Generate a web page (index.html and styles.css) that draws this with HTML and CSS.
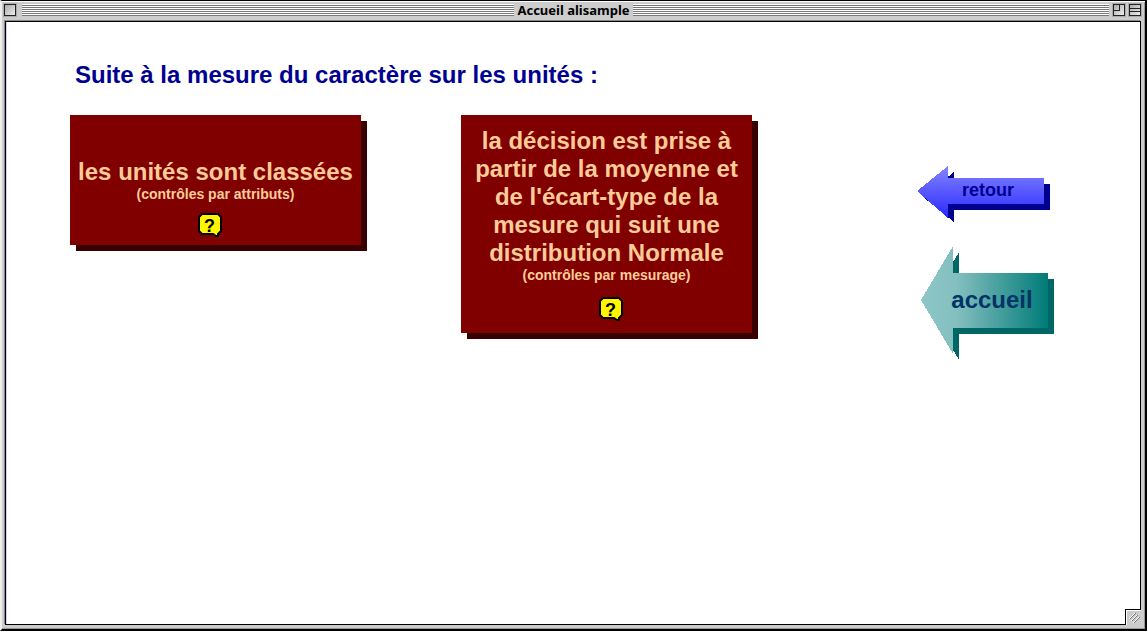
FILE: index.html
```html
<!DOCTYPE html>
<html lang="fr">
<head>
<meta charset="utf-8">
<title>Accueil alisample</title>
<link rel="stylesheet" href="styles.css">
</head>
<body>
<div class="window">
  <header class="titlebar">
    <button class="box box-close" aria-label="Fermer"></button>
    <span class="stripes stripes-left"></span>
    <h1 class="title">Accueil alisample</h1>
    <span class="stripes"></span>
    <button class="box box-zoom" aria-label="Agrandir"><svg viewBox="0 0 10 10" shape-rendering="crispEdges"><path d="M0 5H5V0H6V6H0Z" fill="#222"/></svg></button>
    <button class="box" aria-label="Réduire"><svg viewBox="0 0 10 10" shape-rendering="crispEdges"><path d="M0 3H10V4H0ZM0 6H10V7H0Z" fill="#222"/></svg></button>
  </header>
  <main class="page">
    <h2 class="heading">Suite à la mesure du caractère sur les unités :</h2>
    <div class="choices">
      <section class="card card-short">
        <a class="choice" href="#attributs">les unités sont classées <small class="note">(contrôles par attributs)</small></a>
        <button class="help" aria-label="Aide attributs">
          <svg class="shape" viewBox="0 0 24 25"><path d="M4 1H20L23 4V18L20 21V23H18L15 21H4L1 18V4Z" fill="#fff500" stroke="#000" stroke-width="2"/></svg>
          <span class="mark">?</span>
        </button>
      </section>
      <section class="card card-tall">
        <a class="choice" href="#mesurage">la décision est prise à partir de la moyenne et de l'écart-type de la mesure qui suit une distribution Normale <small class="note">(contrôles par mesurage)</small></a>
        <button class="help" aria-label="Aide mesurage">
          <svg class="shape" viewBox="0 0 24 25"><path d="M4 1H20L23 4V18L20 21V23H18L15 21H4L1 18V4Z" fill="#fff500" stroke="#000" stroke-width="2"/></svg>
          <span class="mark">?</span>
        </button>
      </section>
      <nav class="nav">
        <a class="arrow back" href="#retour">
          <svg class="shape" viewBox="0 0 133 56" shape-rendering="crispEdges">
            <defs><linearGradient id="blue" x1="0" y1="0" x2="0" y2="1"><stop offset="0" stop-color="#8585ff"/><stop offset="1" stop-color="#2929ff"/></linearGradient></defs>
            <path d="M6 31L37 6V18H133V44H37V56Z" fill="#000090"/>
            <path d="M0 25L31 0V12H127V38H31V52Z" fill="url(#blue)"/>
          </svg>
          <span class="label">retour</span>
        </a>
        <a class="arrow home" href="#accueil">
          <svg class="shape" viewBox="0 0 133 114" shape-rendering="crispEdges">
            <defs><linearGradient id="teal"><stop offset="0" stop-color="#8ec6c6"/><stop offset=".28" stop-color="#84bfbf"/><stop offset="1" stop-color="#007b78"/></linearGradient></defs>
            <path d="M6 60L38 6V33H133V88H38V114Z" fill="#006666"/>
            <path d="M0 54L32 0V27H127V82H32V108Z" fill="url(#teal)"/>
          </svg>
          <span class="label">accueil</span>
        </a>
      </nav>
    </div>
  </main>
  <div class="grip"><svg viewBox="0 0 15 15"><path d="M3 9L9 3M5 11L11 5M7 13L13 7" stroke="#fff"/><path d="M4 9L10 3M6 11L12 5M8 13L14 7" stroke="#777"/></svg></div>
</div>
</body>
</html>
```
FILE: styles.css
```css
* {
  box-sizing: border-box;
}

body {
  margin: 0;
  font-family: "Liberation Sans", Arial, sans-serif;
  font-weight: bold;
}

button {
  padding: 0;
  font: inherit;
}

svg {
  display: block;
}

.window {
  position: relative;
  display: flex;
  flex-direction: column;
  min-height: 100vh;
  padding: 0 4px 4px 3px;
  background: #ccc;
  border: solid #000;
  border-width: 1px 2px 2px 0;
  border-left: 2px solid #eee;
  box-shadow: inset 0 1px #fff, inset -1px -1px #999;
}

.titlebar {
  display: flex;
  align-items: center;
  gap: 3px;
  height: 20px;
  margin-left: -1px;
  padding-bottom: 2px;
}

.box {
  flex: none;
  width: 12px;
  height: 12px;
  border: 1px solid #222;
  outline: 1px solid #aaa;
  background: linear-gradient(135deg, #aaa, #eee);
}

.box-close {
  margin-right: 3px;
}

.box-zoom {
  margin: 0 1px;
}

.stripes {
  flex: 1 1 0;
  height: 12px;
  background: repeating-linear-gradient(#fff 0 1px, #777 1px 2px);
}

/* The extra basis offsets the second box on the right, centring the title. */
.stripes-left {
  flex-basis: 16px;
}

.title {
  margin: 0;
  font: bold 13px/18px "Noto Sans", Verdana, sans-serif;
}

.page {
  flex: 1;
  padding: 39px 86px 40px 64px;
  background: #fff;
  border: 1px solid #000;
  box-shadow: inset 1px 0 #ccccff, -1px -1px #888;
}

.heading {
  margin: 0 0 26px;
  padding-left: 5px;
  font-size: 24px;
  line-height: 28px;
  color: #000090;
}

.choices {
  display: grid;
  grid-template-columns: 291fr 291fr 202fr;
  column-gap: 100px;
  align-items: start;
}

.card {
  display: flex;
  flex-direction: column;
  align-items: center;
  padding: 12px 8px 11px;
  color: #ffcc99;
  background: #800000;
  box-shadow: 6px 6px #380000;
  text-align: center;
}

.card-short {
  padding: 43px 0 7px;
}

.choice {
  color: inherit;
  text-decoration: none;
  font-size: 24px;
  line-height: 28px;
}

.note {
  display: block;
  font-size: 14px;
  line-height: 16px;
}

.help {
  position: relative;
  width: 24px;
  height: 25px;
  margin: 11px 12px 0 0;
  border: 0;
  background: none;
  color: #000;
}

.card-tall .help {
  margin: 14px 0 0 8px;
}

.shape {
  position: absolute;
  inset: 0;
  width: 100%;
  height: 100%;
}

.mark {
  position: relative;
  display: block;
  font-size: 18px;
  line-height: 24px;
}

.nav {
  display: flex;
  flex-direction: column;
  gap: 24px;
  width: 137px;
  justify-self: end;
  padding-top: 51px;
}

.arrow {
  position: relative;
  display: grid;
  place-items: center;
  width: 133px;
  padding-left: 9px;
  text-decoration: none;
}

.label {
  position: relative;
}

.back {
  height: 56px;
  padding-bottom: 8px;
  color: #000090;
  font-size: 18px;
}

.home {
  align-self: end;
  height: 114px;
  padding-bottom: 6px;
  color: #003366;
  font-size: 24px;
}

.grip {
  position: absolute;
  right: 4px;
  bottom: 4px;
  width: 16px;
  height: 16px;
  border: solid #000;
  border-width: 1px 0 0 1px;
  background: #ccc;
  box-shadow: inset 1px 1px #fff;
}
```
